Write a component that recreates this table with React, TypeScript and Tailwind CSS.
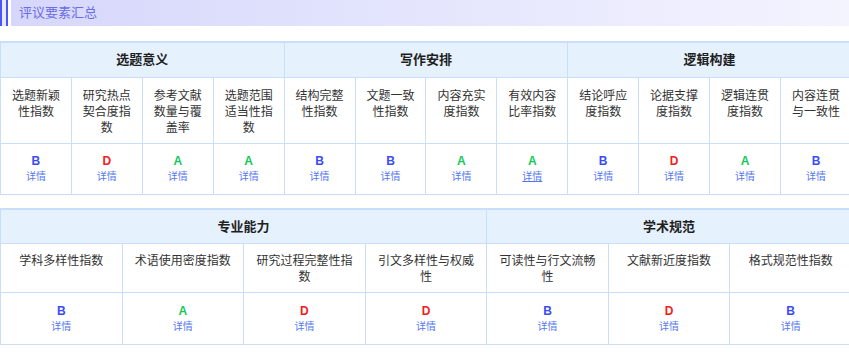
type Item = { name: string; grade: "A" | "B" | "D"; hover?: boolean };
type Group = { title: string; items: Item[] };

const gradeColor: Record<Item["grade"], string> = {
  A: "text-[#14c95c]",
  B: "text-[#3b4cf6]",
  D: "text-[#f31d1d]",
};

const topGroups: Group[] = [
  {
    title: "选题意义",
    items: [
      { name: "选题新颖性指数", grade: "B" },
      { name: "研究热点契合度指数", grade: "D" },
      { name: "参考文献数量与覆盖率", grade: "A" },
      { name: "选题范围适当性指数", grade: "A" },
    ],
  },
  {
    title: "写作安排",
    items: [
      { name: "结构完整性指数", grade: "B" },
      { name: "文题一致性指数", grade: "B" },
      { name: "内容充实度指数", grade: "A" },
      { name: "有效内容比率指数", grade: "A", hover: true },
    ],
  },
  {
    title: "逻辑构建",
    items: [
      { name: "结论呼应度指数", grade: "B" },
      { name: "论据支撑度指数", grade: "D" },
      { name: "逻辑连贯度指数", grade: "A" },
      { name: "内容连贯与一致性", grade: "B" },
    ],
  },
];

const bottomGroups: Group[] = [
  {
    title: "专业能力",
    items: [
      { name: "学科多样性指数", grade: "B" },
      { name: "术语使用密度指数", grade: "A" },
      { name: "研究过程完整性指数", grade: "D" },
      { name: "引文多样性与权威性", grade: "D" },
    ],
  },
  {
    title: "学术规范",
    items: [
      { name: "可读性与行文流畅性", grade: "B" },
      { name: "文献新近度指数", grade: "D" },
      { name: "格式规范性指数", grade: "B" },
    ],
  },
];

function SummaryTable({ groups, rowH, gradeH, pad }: { groups: Group[]; rowH: string; gradeH: string; pad: string }) {
  const items = groups.flatMap((g) => g.items);
  return (
    <table className="w-[852px] table-fixed border-collapse border-t-2 border-[#c9def9]">
      <thead>
        <tr className="h-[35px] bg-[#e6f1fe]">
          {groups.map((g) => (
            <th
              key={g.title}
              colSpan={g.items.length}
              className="border border-[#c9def9] text-[13px] font-bold text-[#1f1f1f]"
            >
              {g.title}
            </th>
          ))}
        </tr>
      </thead>
      <tbody>
        <tr className={rowH}>
          {items.map((it) => (
            <td
              key={it.name}
              className={`border border-[#c9def9] px-[8px] ${pad} align-top text-center text-[12px] leading-[16px] text-[#333]`}
            >
              {it.name}
            </td>
          ))}
        </tr>
        <tr className={gradeH}>
          {items.map((it) => (
            <td key={it.name} className="border border-[#c9def9] text-center align-middle">
              <div className={`text-[12px] font-bold leading-[16px] ${gradeColor[it.grade]}`}>{it.grade}</div>
              <div
                className={`text-[10px] leading-[16px] text-[#5577f3] ${it.hover ? "underline" : ""}`}
              >
                详情
              </div>
            </td>
          ))}
        </tr>
      </tbody>
    </table>
  );
}

export default function App() {
  return (
    <div
      className="h-[357px] w-full overflow-hidden bg-white"
      style={{ fontFamily: '"Liberation Sans", "Noto Sans CJK SC", sans-serif' }}
    >
      <div className="flex h-[26px]">
        <div className="w-[2px] bg-[#4a55f2]" />
        <div className="w-[4px] bg-[#e8e8fd]" />
        <div className="w-[2px] bg-[#4a55f2]" />
        <div className="w-[3px] bg-white" />
        <div className="flex flex-1 items-center bg-gradient-to-r from-[#d6d7fb] to-[#f4f4ff] pl-[8px] text-[13px] text-[#6a6de4]">
          评议要素汇总
        </div>
      </div>
      <div className="mt-[15px]">
        <SummaryTable groups={topGroups} rowH="h-[66px]" gradeH="h-[51px]" pad="pt-[10px]" />
      </div>
      <div className="mt-[13px]">
        <SummaryTable groups={bottomGroups} rowH="h-[49px]" gradeH="h-[52px]" pad="pt-[9px]" />
      </div>
    </div>
  );
}
